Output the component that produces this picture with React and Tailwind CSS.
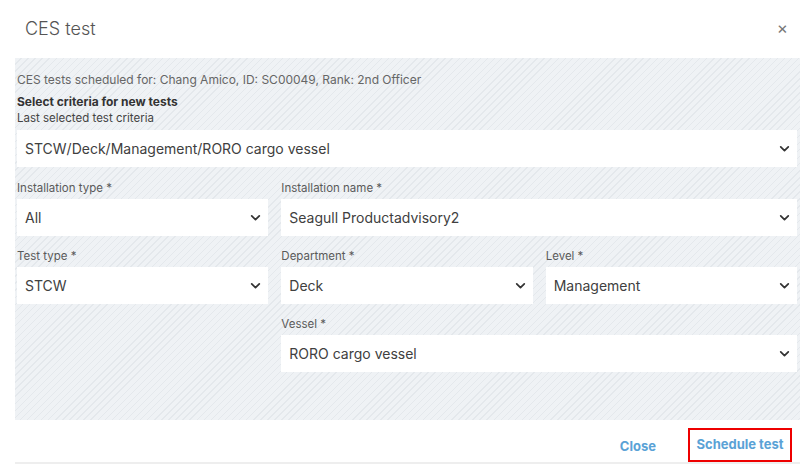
import React from "react";

const Chevron = () => (
  <svg width="13" height="13" viewBox="0 0 24 24" fill="none" stroke="#333" strokeWidth="3.2" strokeLinecap="round" strokeLinejoin="round">
    <path d="m5 9 7 7 7-7" />
  </svg>
);

const Select = ({ value, className = "" }) => (
  <div className={`h-[37px] bg-white flex items-center justify-between pl-[8px] pr-[6px] ${className}`}>
    <span className="text-[14px] text-[#404040]">{value}</span>
    <Chevron />
  </div>
);

const Field = ({ label, value, className = "" }) => (
  <div className={className}>
    <div className="text-[11.5px] leading-[16px] text-[#5a5a5a] mb-[3px]">{label}</div>
    <Select value={value} />
  </div>
);

export default function App() {
  return (
    <div className="w-[805px] h-[465px] bg-white overflow-hidden font-['Inter','Liberation_Sans',sans-serif]">
      {/* header */}
      <div className="h-[58px] flex items-center justify-between pl-[25px] pr-[17px] pt-[1px] pb-[3px]">
        <h2 className="text-[18px] text-[#555] font-light">CES test</h2>
        <span className="text-[#777] text-[17px] leading-none">×</span>
      </div>

      {/* body */}
      <div className="ml-[15px] mr-[5px] h-[362px] pl-[2px] pr-[3px] pt-[14px] bg-[repeating-linear-gradient(135deg,#eff2f5_0px,#eff2f5_4px,#e4e8ec_4px,#e4e8ec_5px)]">
        <p className="text-[12px] leading-[16px] text-[#666]">
          CES tests scheduled for: Chang Amico, ID: SC00049, Rank: 2nd Officer
        </p>
        <p className="mt-[6px] text-[12px] leading-[16px] font-bold text-[#333]">Select criteria for new tests</p>
        <p className="text-[11.5px] leading-[16px] text-[#444]">Last selected test criteria</p>
        <Select value="STCW/Deck/Management/RORO cargo vessel" className="mt-[4px] h-[36px]" />

        <div className="grid grid-cols-3 gap-x-[13px] gap-y-[12px] mt-[13px]">
          <Field label="Installation type *" value="All" />
          <Field label="Installation name *" value="Seagull Productadvisory2" className="col-span-2" />
          <Field label="Test type *" value="STCW" />
          <Field label="Department *" value="Deck" />
          <Field label="Level *" value="Management" />
          <Field label="Vessel *" value="RORO cargo vessel" className="col-start-2 col-span-2" />
        </div>
      </div>

      {/* footer */}
      <div className="ml-[15px] mr-[5px] h-[44px] border-b-2 border-[#eeeeee] flex items-start justify-end pt-[8px] pr-[8px] gap-[32px]">
        <button className="mt-[9px] text-[13px] font-bold text-[#5aa2d6]">Close</button>
        <button className="h-[34px] w-[104px] border-2 border-[#ee0000] text-[13px] font-bold text-[#5aa2d6]">
          Schedule test
        </button>
      </div>
    </div>
  );
}
